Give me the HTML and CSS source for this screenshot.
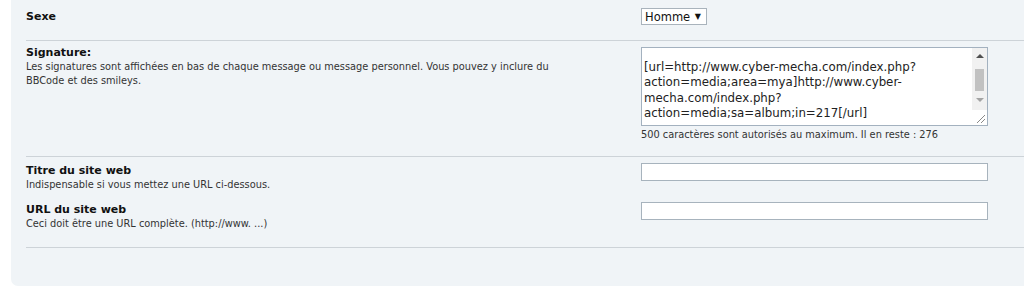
FILE: index.html
```html
<!DOCTYPE html>
<html lang="fr">
<head>
    <meta charset="UTF-8">
    <title>Profil</title>
    <link rel="stylesheet" href="styles.css">
</head>
<body>
    <div class="panel">
        <div class="form-row row-sexe">
            <div class="label"><strong>Sexe</strong></div>
            <div class="field">
                <div class="select">Homme <span class="select-arrow">&#9660;</span></div>
            </div>
        </div>
        <div class="rule"></div>

        <div class="form-row row-signature">
            <div class="label">
                <strong>Signature:</strong>
                <span class="smalltext">Les signatures sont affichées en bas de chaque message ou message personnel. Vous pouvez y inclure du BBCode et des smileys.</span>
            </div>
            <div class="field">
                <div class="textarea">
                    <div class="textarea-view">
                        <div class="textarea-text">
                            <div class="cut-line">[img]http://www.cyber-mecha.com/gg/gg/sig.jpg[/img]</div>
                            <div class="blank-line"></div>
                            [url=http://www.cyber-mecha.com/index.php?<br>
                            action=media;area=mya]http://www.cyber-<br>
                            mecha.com/index.php?<br>
                            action=media;sa=album;in=217[/url]
                        </div>
                    </div>
                    <div class="scrollbar">
                        <span class="sb-up"></span>
                        <span class="sb-thumb"></span>
                        <span class="sb-down"></span>
                        <span class="sb-grip">
                            <svg width="15" height="15" viewBox="0 0 15 15">
                                <line x1="13" y1="5" x2="5" y2="13" stroke="#8a8a8a" stroke-width="1"/>
                                <line x1="13" y1="9" x2="9" y2="13" stroke="#8a8a8a" stroke-width="1"/>
                            </svg>
                        </span>
                    </div>
                </div>
                <div class="smalltext count">500 caractères sont autorisés au maximum. Il en reste : 276</div>
            </div>
        </div>
        <div class="rule"></div>

        <div class="form-row row-site">
            <div class="label">
                <strong>Titre du site web</strong>
                <span class="smalltext">Indispensable si vous mettez une URL ci-dessous.</span>
            </div>
            <div class="field">
                <div class="input"></div>
            </div>
        </div>
        <div class="form-row row-url">
            <div class="label">
                <strong>URL du site web</strong>
                <span class="smalltext">Ceci doit être une URL complète. (http://www. ...)</span>
            </div>
            <div class="field">
                <div class="input"></div>
            </div>
        </div>
        <div class="rule"></div>
    </div>
</body>
</html>
```

FILE: styles.css
```css
body {
    margin: 0;
    background-color: #ffffff;
    font-family: "DejaVu Sans", Verdana, sans-serif;
    color: #000000;
    overflow: hidden;
}

.panel {
    margin-left: 11px;
    height: 286px;
    padding-left: 15px;
    background-color: #f0f4f7;
    border-bottom-left-radius: 7px;
    box-sizing: border-box;
}

.form-row {
    display: flex;
    box-sizing: border-box;
}

.label {
    width: 615px;
    flex-shrink: 0;
}

.label strong {
    display: block;
    font-size: 11px;
    line-height: 14px;
    color: #111111;
}

.smalltext {
    display: block;
    font-size: 9.8px;
    line-height: 14px;
    color: #333333;
}

.label .smalltext {
    width: 535px;
}

.rule {
    height: 1px;
    background-color: #cdd3d8;
}

.row-sexe {
    height: 40px;
    padding-top: 10px;
}

.row-sexe .field {
    margin-top: -2px;
}

.select {
    display: block;
    height: 17px;
    width: 66px;
    box-sizing: border-box;
    border: 1px solid #a9b3bc;
    background-color: #ffffff;
    font-size: 11.5px;
    line-height: 15px;
    padding-left: 3px;
    color: #111111;
}

.select-arrow {
    font-size: 8px;
    vertical-align: 2px;
    margin-left: 1px;
}

.row-signature {
    height: 115px;
    padding-top: 5px;
}

.row-signature .field {
    padding-top: 1px;
}

.textarea {
    display: flex;
    width: 347px;
    height: 79px;
    box-sizing: border-box;
    border: 1px solid #a3b1bf;
    background-color: #ffffff;
}

.textarea-view {
    flex-grow: 1;
    overflow: hidden;
}

.textarea-text {
    margin-top: -14px;
    padding-left: 2px;
    font-size: 11.8px;
    line-height: 15.5px;
    color: #222222;
}

.cut-line {
    white-space: nowrap;
}

.blank-line {
    height: 10px;
}

.scrollbar {
    width: 15px;
    flex-shrink: 0;
    background-color: #f1f1f1;
    display: flex;
    flex-direction: column;
    align-items: center;
}

.sb-up {
    margin-top: 6px;
    width: 0;
    height: 0;
    border-left: 4px solid transparent;
    border-right: 4px solid transparent;
    border-bottom: 4px solid #505050;
}

.sb-thumb {
    margin-top: 11px;
    width: 9px;
    height: 22px;
    background-color: #c1c1c1;
}

.sb-down {
    margin-top: 7px;
    width: 0;
    height: 0;
    border-left: 4px solid transparent;
    border-right: 4px solid transparent;
    border-top: 4px solid #a3a3a3;
}

.sb-grip {
    margin-top: auto;
    width: 15px;
    height: 15px;
    background-color: #ffffff;
    display: block;
}

.count {
    margin-top: 2px;
}

.row-site {
    height: 35px;
    padding-top: 7px;
}

.row-url {
    height: 55px;
    padding-top: 11px;
}

.row-site .field,
.row-url .field {
    margin-top: -1px;
}

.input {
    width: 347px;
    height: 18px;
    box-sizing: border-box;
    border: 1px solid #a7b3bd;
    background-color: #ffffff;
}
```
